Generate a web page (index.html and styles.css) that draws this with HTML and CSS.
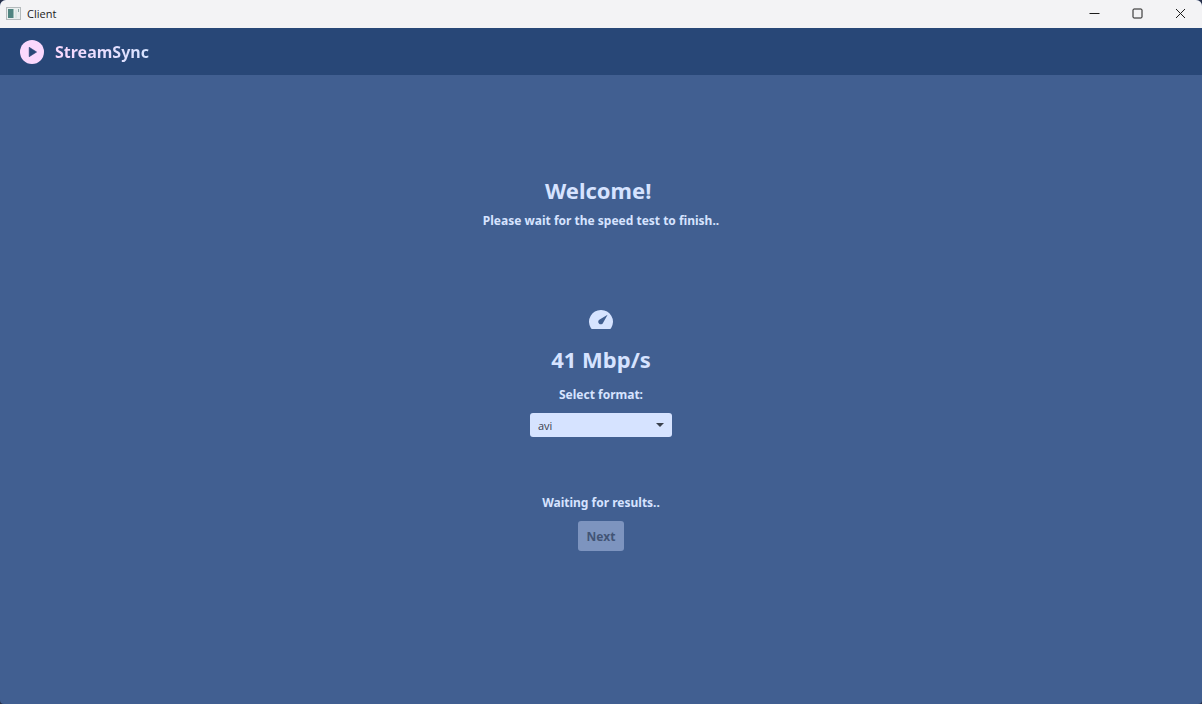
FILE: index.html
```html
<!DOCTYPE html>
<html lang="en">
<head>
<meta charset="utf-8">
<title>Client</title>
<link rel="stylesheet" href="styles.css">
</head>
<body>
<div class="window">
  <div class="titlebar">
    <svg class="app-icon" width="15" height="13" viewBox="0 0 15 13" aria-hidden="true">
      <rect x="0.5" y="0.5" width="14" height="12" fill="#e9eeee" stroke="#b4babc"/>
      <rect x="2" y="2" width="5" height="9" fill="#4f8480"/>
      <rect x="7" y="2" width="1" height="9" fill="#9cbcb6"/>
      <rect x="9" y="3" width="2" height="8" fill="#dbe6e4"/>
      <rect x="12" y="2" width="1" height="3" fill="#8aa6a4"/>
    </svg>
    <span class="window-title">Client</span>
    <div class="window-controls">
      <button class="control" type="button" aria-label="Minimize">
        <svg width="11" height="11" viewBox="0 0 11 11"><path d="M0.500 5.500H10.500"/></svg>
      </button>
      <button class="control" type="button" aria-label="Maximize">
        <svg width="11" height="11" viewBox="0 0 11 11"><rect x="1" y="1" width="9" height="9" rx="1"/></svg>
      </button>
      <button class="control" type="button" aria-label="Close">
        <svg width="11" height="11" viewBox="0 0 11 11"><path d="M1 1L10 10M10 1L1 10"/></svg>
      </button>
    </div>
  </div>
  <header class="header">
    <svg width="24" height="24" viewBox="0 0 24 24" aria-hidden="true">
      <circle cx="12" cy="12" r="12" fill="#fad8fd"/>
      <path d="M9.200 7.300L16.600 12L9.200 16.700Z" fill="#284777" stroke="#284777" stroke-width="0.600" stroke-linejoin="round"/>
    </svg>
    <span class="brand">StreamSync</span>
  </header>
  <main class="content">
    <section class="intro">
      <h1 class="heading welcome">Welcome! </h1>
      <p class="label">Please wait for the speed test to finish..</p>
    </section>
    <section class="speed">
      <svg width="24" height="20" viewBox="0 0 24 20" aria-hidden="true">
        <path d="M12 0A11.800 11.800 0 0 0 1.700 17.700Q2.400 19 3 19H21Q21.600 19 22.300 17.700A11.800 11.800 0 0 0 12 0Z" fill="#d6e3ff"/>
        <path d="M18.600 4.700L14 12.900A2.500 2.500 0 1 1 10.300 9.800Z" fill="#415f91"/>
      </svg>
      <p class="heading">41 Mbp/s</p>
      <label class="label" for="format">Select format:</label>
      <div class="select-box">
        <select id="format" class="select"><option>avi</option></select>
        <svg class="arrow" width="8" height="4" viewBox="0 0 8 4" aria-hidden="true"><path d="M0 0H8L4 4Z" fill="#3a414d"/></svg>
      </div>
    </section>
    <section class="result">
      <p class="label">Waiting for results..</p>
      <button class="next" type="button" disabled>Next</button>
    </section>
  </main>
</div>
</body>
</html>
```
FILE: styles.css
```css
* { box-sizing: border-box; }

body {
  margin: 0;
  background: #27304a;
  font-family: "Noto Sans", "Open Sans", sans-serif;
}

.window {
  display: flex;
  flex-direction: column;
  min-height: 100vh;
  border-radius: 6px 6px 4px 4px;
  overflow: hidden;
  background: #415f91;
}

.titlebar {
  display: flex;
  align-items: center;
  height: 28px;
  padding: 0 0 2px 6px;
  gap: 6px;
  background: #f3f3f5;
}

.window-title {
  font-family: "Open Sans", sans-serif;
  font-size: 11px;
  color: #1b1b1b;
}

.window-controls {
  display: flex;
  margin-left: auto;
}

.control {
  display: flex;
  align-items: center;
  justify-content: center;
  width: 43px;
  height: 26px;
  padding: 0;
  border: 0;
  background: transparent;
}

.control svg {
  fill: none;
  stroke: #1b1b1b;
}

.header {
  display: flex;
  align-items: center;
  gap: 11px;
  height: 47px;
  padding-left: 20px;
  background: #284777;
}

.brand {
  font-size: 16px;
  font-weight: 700;
  background: linear-gradient(to right, #fad8fd, #d6e3ff);
  background-clip: text;
  -webkit-background-clip: text;
  color: transparent;
}

.content {
  flex: 1;
  display: flex;
  flex-direction: column;
  align-items: center;
  padding: 98px 16px 16px;
  color: #d6e3ff;
}

.intro,
.speed,
.result {
  display: flex;
  flex-direction: column;
  align-items: center;
}

.heading {
  margin: 0;
  font-size: 22px;
  line-height: 34px;
  font-weight: 700;
}

.welcome {
  white-space: pre;
}

.label {
  margin: 0;
  font-size: 12px;
  line-height: 18px;
  font-weight: 700;
}

.intro { gap: 5px; }

.speed { margin-top: 80px; }

.speed .heading { margin-top: 12px; }

.speed .label { margin-top: 10px; }

.select-box {
  display: grid;
  align-items: center;
  width: 142px;
  margin-top: 9px;
}

.select,
.arrow {
  grid-area: 1 / 1;
}

.select {
  appearance: none;
  width: 100%;
  height: 24px;
  padding: 0 8px;
  border: 0;
  border-radius: 3px;
  background: #d6e3ff;
  color: #3a414d;
  font-family: "Open Sans", sans-serif;
  font-size: 11px;
}

.arrow {
  justify-self: end;
  margin-right: 8px;
  pointer-events: none;
}

.result {
  margin-top: 57px;
  gap: 9px;
}

.next {
  height: 30px;
  padding: 0 9px;
  border: 0;
  border-radius: 3px;
  background: #7d94bf;
  color: #425476;
  font-family: inherit;
  font-size: 12px;
  font-weight: 700;
}
```
